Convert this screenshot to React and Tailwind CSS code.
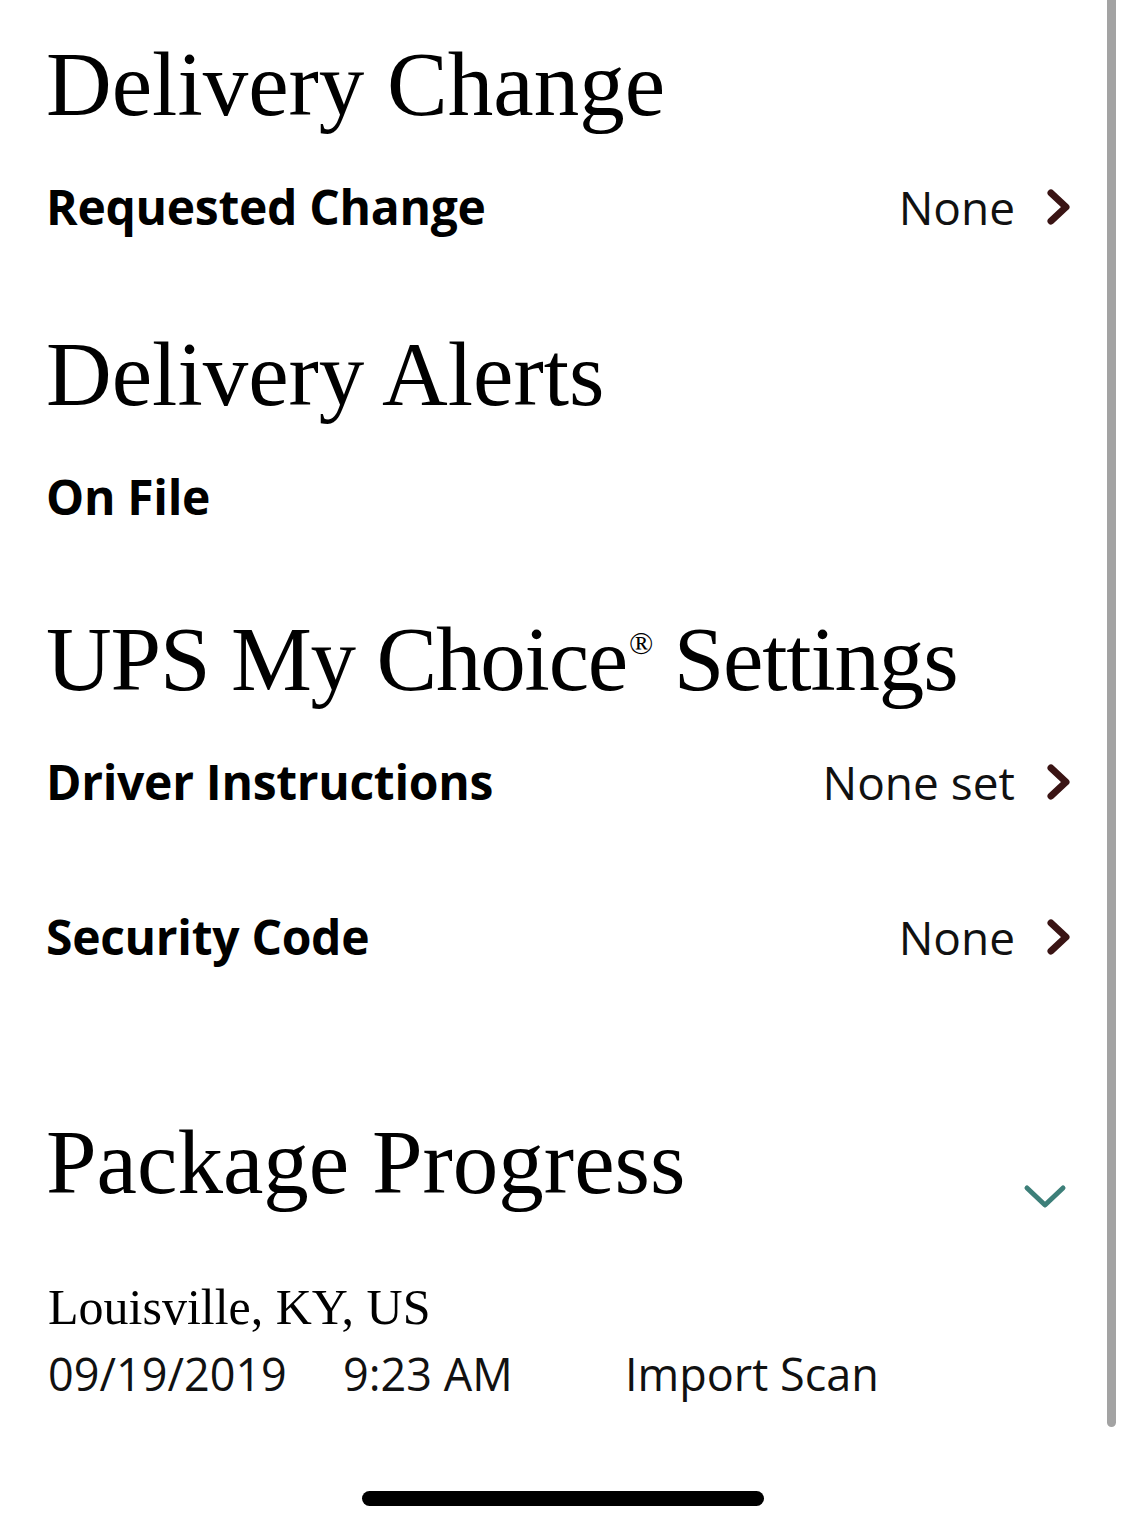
const serif = "font-['Liberation_Serif',serif]";
const sans = "font-['Open_Sans',sans-serif]";

const ChevronRight = () => (
  <svg width="28" height="40" viewBox="0 0 28 40" className="shrink-0">
    <path
      d="M6 6 L21 20 L6 34"
      fill="none"
      stroke="#3a1414"
      strokeWidth="7"
      strokeLinecap="round"
      strokeLinejoin="round"
    />
  </svg>
);

const ChevronDown = () => (
  <svg width="44" height="28" viewBox="0 0 44 28">
    <path
      d="M4 5 L22 22 L40 5"
      fill="none"
      stroke="#3d7f79"
      strokeWidth="5"
      strokeLinecap="round"
      strokeLinejoin="round"
    />
  </svg>
);

const Heading = ({ children, className = "" }) => (
  <h1 className={`${serif} text-[91px] leading-[88px] h-[88px] text-black -ml-[2px] ${className}`}>
    {children}
  </h1>
);

const Row = ({ label, value, className = "" }) => (
  <div className={`flex items-center justify-between h-[46px] ${className}`}>
    <span className={`${sans} font-bold text-[48px] leading-[46px] text-black tracking-[-0.3px] -ml-[2px]`}>
      {label}
    </span>
    {value && (
      <div className="flex items-center gap-[30px]">
        <span className={`${sans} text-[46px] leading-[46px] text-[#111]`}>{value}</span>
        <ChevronRight />
      </div>
    )}
  </div>
);

export default function App() {
  return (
    <div className="relative w-[1125px] h-[1529px] bg-white overflow-hidden">
      <div className="pl-[48px] pr-[52px] pt-[41px] flex flex-col">
        <Heading>Delivery Change</Heading>
        <Row label="Requested Change" value="None" className="mt-[55px]" />

        <Heading className="mt-[101px]">Delivery Alerts</Heading>
        <Row label="On File" className="mt-[55px]" />

        <Heading className="mt-[96px] tracking-[-1.2px]">
          UPS My Choice
          <span className="text-[32px] leading-[0] relative top-[-36px] ml-[2px]">®</span> Settings
        </Heading>
        <Row label="Driver Instructions" value="None set" className="mt-[55px]" />
        <Row label="Security Code" value="None" className="mt-[109px]" />

        <div className="mt-[159px] flex items-start justify-between">
          <Heading>Package Progress</Heading>
          <div className="mr-[6px] mt-[64px]">
            <ChevronDown />
          </div>
        </div>

        <p className={`${serif} mt-[71px] text-[50px] leading-[50px] text-black`}>
          Louisville, KY, US
        </p>
        <div className={`${sans} mt-[19px] flex text-[45px] leading-[46px] text-[#111]`}>
          <span className="w-[295px]">09/19/2019</span>
          <span className="w-[282px]">9:23 AM</span>
          <span>Import Scan</span>
        </div>
      </div>

      <div className="absolute left-[1107px] top-0 w-[9px] h-[1427px] bg-[#a3a3a3] rounded-b-full" />
      <div className="absolute left-[362px] top-[1491px] w-[402px] h-[15px] bg-black rounded-full" />
    </div>
  );
}
